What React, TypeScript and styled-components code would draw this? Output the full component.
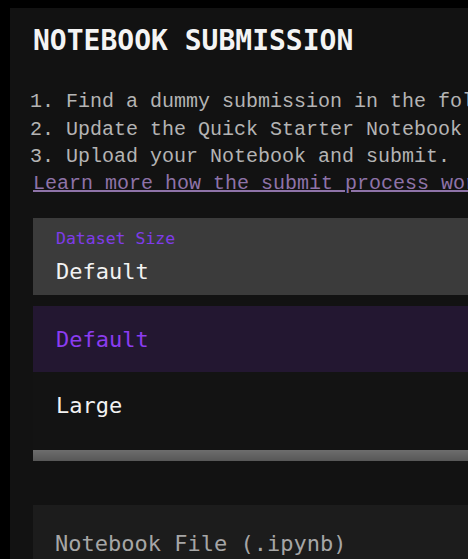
import React from "react";
import styled, { createGlobalStyle } from "styled-components";

const GlobalStyle = createGlobalStyle`
  html, body {
    margin: 0;
    padding: 0;
    background: #000;
    overflow: hidden;
  }
`;

const Panel = styled.div`
  margin: 8px 0 0 10px;
  width: 640px;
  min-height: 600px;
  background: #121212;
  padding: 17px 0 0 23px;
  box-sizing: border-box;
`;

const Title = styled.h1`
  margin: 0;
  font-family: "DejaVu Sans Mono", monospace;
  font-weight: bold;
  font-size: 28px;
  line-height: 32px;
  color: #f4f4f4;
  letter-spacing: 0;
`;

const Steps = styled.ol`
  list-style: none;
  margin: 31px 0 0 -3px;
  padding: 0;
  font-family: "Liberation Mono", monospace;
  font-size: 20px;
  line-height: 27.5px;
  color: #b4b4b4;
  white-space: nowrap;
`;

const Link = styled.a`
  display: block;
  margin-top: -1px;
  font-family: "Liberation Mono", monospace;
  font-size: 20px;
  line-height: 27.5px;
  color: #8e73a8;
  text-decoration: underline;
  white-space: nowrap;
`;

const Select = styled.div`
  margin-top: 21px;
  height: 77px;
  background: #3b3b3b;
  padding: 11px 0 0 23px;
  box-sizing: border-box;
  font-family: "DejaVu Sans Mono", monospace;
`;

const Label = styled.div`
  font-size: 16.5px;
  line-height: 20px;
  color: #7f3bea;
`;

const Value = styled.div`
  margin-top: 11px;
  font-size: 22px;
  line-height: 24px;
  color: #f2f2f2;
`;

const Menu = styled.div`
  margin-top: 11px;
  background: #131313;
  padding-bottom: 12px;
  font-family: "DejaVu Sans Mono", monospace;
`;

const Option = styled.div<{ $selected?: boolean }>`
  height: 66px;
  display: flex;
  align-items: center;
  padding-left: 23px;
  font-size: 22px;
  color: ${(p) => (p.$selected ? "#8b3cf0" : "#f2f2f2")};
  background: ${(p) => (p.$selected ? "#231731" : "transparent")};
`;

const Shadow = styled.div`
  height: 11px;
  background: linear-gradient(#6d6d6d, #575757);
`;

const FileInput = styled.div`
  margin-top: 44px;
  height: 80px;
  background: #1c1c1c;
  padding: 26px 0 0 22px;
  box-sizing: border-box;
  font-family: "DejaVu Sans Mono", monospace;
  font-size: 22px;
  line-height: 26px;
  color: #a6a6a6;
`;

const App = () => {
  return (
    <>
      <GlobalStyle />
      <Panel>
        <Title>NOTEBOOK SUBMISSION</Title>
        <Steps>
          <li>1. Find a dummy submission in the folder of the challenge.</li>
          <li>2. Update the Quick Starter Notebook with your solution.</li>
          <li>3. Upload your Notebook and submit.</li>
        </Steps>
        <Link href="#">Learn more how the submit process works</Link>
        <Select>
          <Label>Dataset Size</Label>
          <Value>Default</Value>
        </Select>
        <Menu>
          <Option $selected>Default</Option>
          <Option>Large</Option>
        </Menu>
        <Shadow />
        <FileInput>Notebook File (.ipynb)</FileInput>
      </Panel>
    </>
  );
};

export default App;
